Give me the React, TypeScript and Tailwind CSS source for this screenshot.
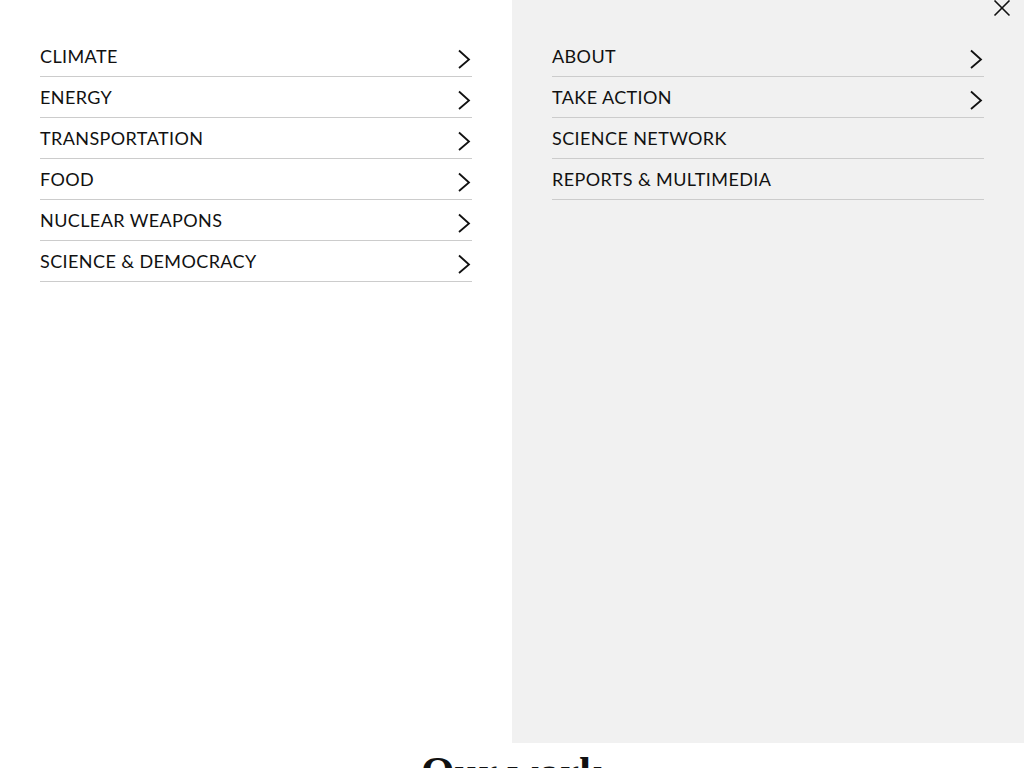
const topics = [
  "CLIMATE",
  "ENERGY",
  "TRANSPORTATION",
  "FOOD",
  "NUCLEAR WEAPONS",
  "SCIENCE & DEMOCRACY",
];

const orgLinks = [
  { label: "ABOUT", more: true },
  { label: "TAKE ACTION", more: true },
  { label: "SCIENCE NETWORK", more: false },
  { label: "REPORTS & MULTIMEDIA", more: false },
];

function Chevron() {
  return (
    <svg width="14" height="20" viewBox="0 0 14 20" fill="none" className="shrink-0">
      <path d="M2 1.5 L12 10.5 L2 19" stroke="#111" strokeWidth="1.8" />
    </svg>
  );
}

function MenuRow({ label, more }: { label: string; more: boolean }) {
  return (
    <li className="flex items-center justify-between h-[41px] border-b border-[#cccccc]">
      <a href="#" className="text-[18px] tracking-[0.4px] text-[#111]">
        {label}
      </a>
      {more && (
        <span className="mt-[6px] mr-[1px]">
          <Chevron />
        </span>
      )}
    </li>
  );
}

export default function App() {
  return (
    <div className="relative w-full min-h-[768px] overflow-hidden bg-white font-['Lato',sans-serif]">
      <nav className="flex h-[743px]">
        <div className="w-1/2 bg-white px-10 pt-[36px]">
          <ul>
            {topics.map((t) => (
              <MenuRow key={t} label={t} more />
            ))}
          </ul>
        </div>
        <div className="w-1/2 bg-[#f1f1f1] px-10 pt-[36px]">
          <ul>
            {orgLinks.map((l) => (
              <MenuRow key={l.label} label={l.label} more={l.more} />
            ))}
          </ul>
        </div>
      </nav>
      <button className="absolute right-[13px] top-0" aria-label="Close menu">
        <svg width="18" height="17" viewBox="0 0 18 17" fill="none">
          <path d="M1.5 0.5 L16.5 15.5 M16.5 0.5 L1.5 15.5" stroke="#111" strokeWidth="1.6" />
        </svg>
      </button>
      <h2 className="mt-[2px] text-center text-[43px] font-bold leading-tight text-[#111] font-['Liberation_Serif',serif]">
        Our work
      </h2>
    </div>
  );
}
